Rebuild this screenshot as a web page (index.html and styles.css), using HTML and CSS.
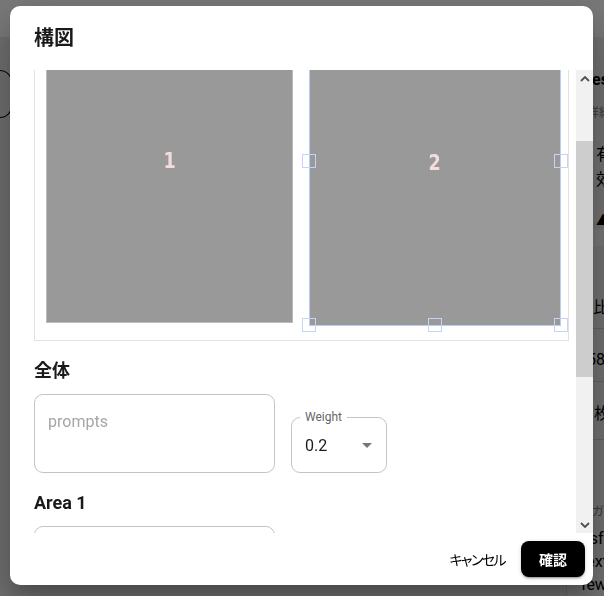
FILE: index.html
```html
<!DOCTYPE html>
<html lang="ja">
<head>
<meta charset="utf-8">
<title>構図</title>
<link rel="stylesheet" href="styles.css">
</head>
<body>
<div class="page">
  <header class="topbar"></header>
  <div class="main">
    <div class="left-area">
      <div class="outline-box"></div>
    </div>
    <aside class="side">
      <div class="s-title">Presets</div>
      <div class="s-sub">詳細設定</div>
      <div class="s-text">有<br>効</div>
      <div class="s-icon">▲</div>
      <div class="s-band"></div>
      <div class="s-row r1">比率</div>
      <div class="s-row r2">58</div>
      <div class="s-row r3">枚数</div>
      <div class="s-small">ガデ</div>
      <div class="s-para">nsfw,<br>text,<br>fewer</div>
    </aside>
  </div>
</div>

<div class="backdrop"></div>

<div class="dialog">
  <h2 class="dialog-title">構図</h2>
  <div class="dialog-body">
    <div class="dialog-scroll">
      <div class="canvas">
        <div class="area area-plain"><span class="area-num">1</span></div>
        <div class="area area-selected"><span class="area-num">2</span></div>
        <span class="handle h-ml"></span>
        <span class="handle h-mr"></span>
        <span class="handle h-bl"></span>
        <span class="handle h-bm"></span>
        <span class="handle h-br"></span>
      </div>

      <section class="section">
        <h3 class="section-label">全体</h3>
        <div class="field-row">
          <textarea class="prompt-input" placeholder="prompts"></textarea>
          <div class="select">
            <span class="select-label">Weight</span>
            <span class="select-value">0.2</span>
            <svg class="select-arrow" viewBox="0 0 24 24" width="24" height="24"><path d="M7 10l5 5 5-5z"/></svg>
          </div>
        </div>
      </section>

      <section class="section">
        <h3 class="section-label">Area 1</h3>
        <div class="field-row">
          <textarea class="prompt-input" placeholder=""></textarea>
        </div>
      </section>
    </div>
    <div class="scrollbar">
      <div class="sb-btn">
        <svg viewBox="0 0 10 6" width="10" height="6"><path d="M1 5 L5 1 L9 5" fill="none" stroke="#505050" stroke-width="1.8"/></svg>
      </div>
      <div class="sb-track"><div class="sb-thumb"></div></div>
      <div class="sb-btn">
        <svg viewBox="0 0 10 6" width="10" height="6"><path d="M1 1 L5 5 L9 1" fill="none" stroke="#505050" stroke-width="1.8"/></svg>
      </div>
    </div>
  </div>
  <div class="dialog-actions">
    <button class="btn-text">キャンセル</button>
    <button class="btn-primary">確認</button>
  </div>
</div>
</body>
</html>
```
FILE: styles.css
```css
* { box-sizing: border-box; }

html, body {
  margin: 0;
  padding: 0;
  width: 604px;
  height: 596px;
  overflow: hidden;
}

body {
  font-family: Roboto, "Noto Sans CJK JP", sans-serif;
  color: #000;
  background: #dedede;
}

/* ---------- page behind the dialog ---------- */
.page {
  width: 604px;
  height: 596px;
  display: flex;
  flex-direction: column;
}

.topbar {
  height: 37px;
  background: #f2f2f2;
  flex: none;
}

.main {
  flex: 1;
  display: flex;
  overflow: hidden;
}

.left-area {
  width: 566px;
  flex: none;
  padding-top: 33px;
}

.outline-box {
  width: 12px;
  height: 48px;
  border: 1.5px solid #000;
  border-left: none;
  border-radius: 0 12px 12px 0;
}

.side {
  width: 300px;
  flex: none;
  border-left: 1px solid #c8c8c8;
  background: #e2e2e2;
  display: flex;
  flex-direction: column;
  font-size: 16px;
}

.s-title {
  margin-top: 28px;
  padding-left: 9px;
  line-height: 30px;
  font-weight: 700;
}

.s-sub {
  margin-top: 10px;
  padding-left: 20px;
  font-size: 12px;
  line-height: 16px;
  color: #777;
}

.s-text {
  margin-top: 21px;
  padding-left: 29px;
  line-height: 25px;
}

.s-icon {
  margin-top: 19px;
  padding-left: 29px;
  font-size: 14px;
  line-height: 18px;
}

.s-band {
  height: 18px;
  background: #ececec;
}

.s-row {
  line-height: 24px;
  border-bottom: 1px solid #c4c4c4;
}
.s-row.r1 { height: 85px; padding-top: 50px; padding-left: 26px; }
.s-row.r2 { height: 55px; padding-top: 19px; padding-left: 20px; }
.s-row.r3 { height: 60px; padding-top: 20px; padding-left: 27px; }

.s-small {
  margin-top: 64px;
  padding-left: 25px;
  font-size: 12px;
  line-height: 16px;
  color: #777;
}

.s-para {
  margin-top: 7px;
  padding-left: 14px;
  line-height: 23px;
  font-size: 16px;
}

.backdrop {
  position: fixed;
  inset: 0;
  background: rgba(0, 0, 0, 0.5);
}

/* ---------- dialog ---------- */
.dialog {
  position: fixed;
  left: 10px;
  top: 6px;
  width: 583px;
  height: 579px;
  background: #fff;
  border-radius: 10px;
  overflow: hidden;
  display: flex;
  flex-direction: column;
  box-shadow:
    0 11px 15px -7px rgba(0, 0, 0, 0.2),
    0 24px 38px 3px rgba(0, 0, 0, 0.14),
    0 9px 46px 8px rgba(0, 0, 0, 0.12);
}

.dialog-title {
  margin: 0;
  flex: none;
  padding: 16px 24px;
  font-size: 20px;
  line-height: 32px;
  font-weight: 700;
  color: #1a1a1a;
  font-feature-settings: "palt";
}

.dialog-body {
  flex: 1;
  min-height: 0;
  display: flex;
}

.dialog-scroll {
  flex: 1;
  overflow: hidden;
  padding-left: 24px;
}

/* canvas of areas */
.canvas {
  position: relative;
  width: 535px;
  height: 271px;
  border: 1px solid #e2e2e2;
  border-top: none;
  overflow: hidden;
}

.area {
  position: absolute;
  top: -73px;
  background: #999999;
  display: flex;
  align-items: center;
  justify-content: center;
}

.area-plain {
  left: 11px;
  width: 247px;
  height: 326px;
  border: 1px solid #bcbcbc;
}

.area-selected {
  left: 274px;
  width: 252px;
  height: 329px;
  border: 1px solid #b9cdf3;
}

.area-num {
  font-family: "DejaVu Sans", sans-serif;
  font-size: 22px;
  font-weight: 700;
  color: #f5dcdc;
  margin-top: 1px;
  transform: scaleX(0.8);
}

.handle {
  position: absolute;
  width: 14px;
  height: 14px;
  border: 1.5px solid #c3d4f5;
}
.h-ml { left: 267px; top: 84px; }
.h-mr { left: 519px; top: 84px; }
.h-bl { left: 267px; top: 248px; }
.h-bm { left: 393px; top: 248px; }
.h-br { left: 519px; top: 248px; }

/* sections */
.section {
  margin-top: 18px;
}

.section-label {
  margin: 0 0 11px;
  font-size: 18px;
  line-height: 24px;
  font-weight: 700;
  color: #1a1a1a;
}

.field-row {
  display: flex;
  align-items: flex-end;
  gap: 16px;
}

.prompt-input {
  display: block;
  width: 241px;
  height: 79px;
  margin: 0;
  padding: 15px 13px;
  border: 1px solid #c4c4c4;
  border-radius: 9px;
  resize: none;
  font-family: Roboto, "Noto Sans CJK JP", sans-serif;
  font-size: 16px;
  line-height: 23px;
  color: rgba(0, 0, 0, 0.87);
  background: #fff;
  outline: none;
}

.prompt-input::placeholder {
  color: #a6a6a6;
  opacity: 1;
}

.select {
  position: relative;
  width: 96px;
  height: 56px;
  border: 1px solid #c4c4c4;
  border-radius: 9px;
  display: flex;
  align-items: center;
  padding: 0 7px 0 13px;
}

.select-label {
  position: absolute;
  left: 8px;
  top: -9px;
  padding: 0 5px;
  background: #fff;
  font-size: 12px;
  line-height: 16px;
  color: #666;
}

.select-value {
  font-size: 16px;
  line-height: 23px;
  color: #1a1a1a;
}

.select-arrow {
  margin-left: auto;
  fill: #777;
}

/* fake scrollbar */
.scrollbar {
  width: 17px;
  flex: none;
  background: #f1f1f1;
  display: flex;
  flex-direction: column;
}

.sb-btn {
  height: 17px;
  flex: none;
  display: flex;
  align-items: center;
  justify-content: center;
}

.sb-track {
  flex: 1;
  padding-top: 54px;
}

.sb-thumb {
  height: 236px;
  background: #cdcdcd;
}

/* actions */
.dialog-actions {
  flex: none;
  display: flex;
  justify-content: flex-end;
  align-items: center;
  gap: 8px;
  padding: 8px;
  font-feature-settings: "palt";
}

.btn-text {
  border: none;
  background: transparent;
  font-family: "Noto Sans CJK JP", sans-serif;
  font-size: 14px;
  font-weight: 400;
  line-height: 24px;
  padding: 6px 8px;
  letter-spacing: -1.6px;
  color: #000;
  font-feature-settings: "palt";
}

.btn-primary {
  border: none;
  background: #000;
  color: #fff;
  height: 36px;
  min-width: 64px;
  padding: 6px 16px;
  border-radius: 8px;
  font-family: "Noto Sans CJK JP", sans-serif;
  font-size: 14px;
  font-weight: 700;
  line-height: 24px;
  box-shadow:
    0 3px 1px -2px rgba(0, 0, 0, 0.2),
    0 2px 2px 0 rgba(0, 0, 0, 0.14),
    0 1px 5px 0 rgba(0, 0, 0, 0.12);
}
```
